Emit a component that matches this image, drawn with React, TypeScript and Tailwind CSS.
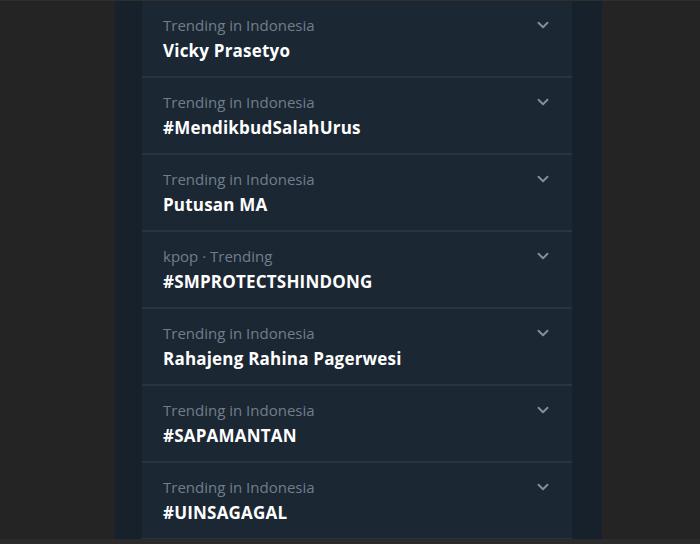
import { ChevronDown } from 'lucide-react';

const TRENDS = [
  { label: 'Trending in Indonesia', title: 'Vicky Prasetyo' },
  { label: 'Trending in Indonesia', title: '#MendikbudSalahUrus' },
  { label: 'Trending in Indonesia', title: 'Putusan MA' },
  { label: 'kpop · Trending', title: '#SMPROTECTSHINDONG' },
  { label: 'Trending in Indonesia', title: 'Rahajeng Rahina Pagerwesi' },
  { label: 'Trending in Indonesia', title: '#SAPAMANTAN' },
  { label: 'Trending in Indonesia', title: '#UINSAGAGAL' },
];

function TrendRow({ label, title }: { label: string; title: string }) {
  return (
    <div className="h-[77px] border-b-2 border-[#283440] pl-[21px] pr-[20px] pt-[13px] flex justify-between">
      <div className="flex flex-col">
        <span className="text-[15px] leading-[22px] text-[#717e8a]">{label}</span>
        <span className="text-[17px] leading-[26px] mt-[2px] font-bold tracking-[0.2px] text-white">{title}</span>
      </div>
      <ChevronDown className="w-[18px] h-[18px] text-[#8090a0] mt-[2px]" strokeWidth={2.5} />
    </div>
  );
}

export default function App() {
  return (
    <div
      className="w-[700px] h-[544px] bg-[#242424] border-t border-[#2e2e2e] border-b-[5px] border-b-[#2b2b2b] flex overflow-hidden"
      style={{ fontFamily: '"Open Sans", "Noto Sans", sans-serif' }}
    >
      <div className="ml-[115px] w-[487px] h-full bg-[#17212b] pl-[27px]">
        <div className="w-[430px] h-full bg-[#1c2734]">
          {TRENDS.map((t, i) => (
            <TrendRow key={i} label={t.label} title={t.title} />
          ))}
        </div>
      </div>
    </div>
  );
}
